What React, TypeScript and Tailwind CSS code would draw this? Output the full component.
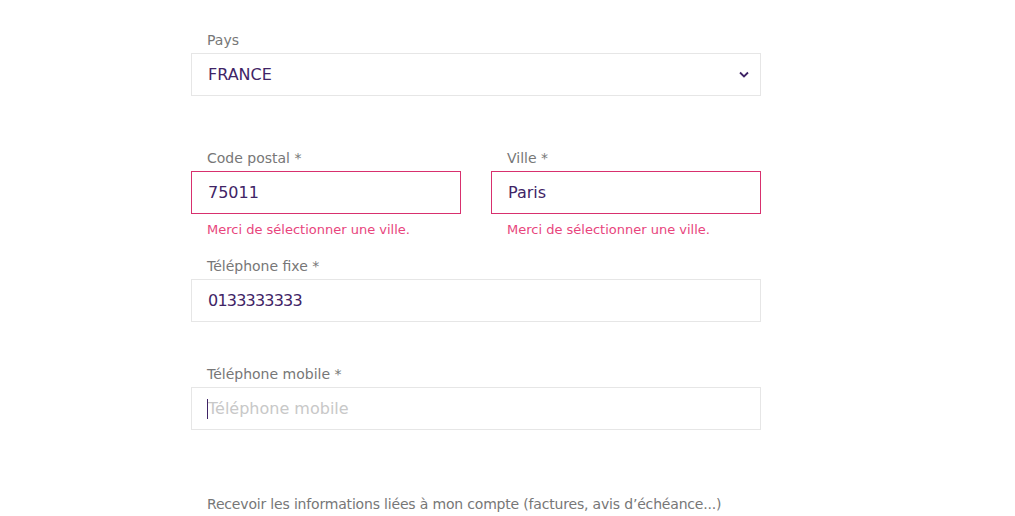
import React, { useState } from 'react';

const font = { fontFamily: '"DejaVu Sans", "Open Sans", sans-serif' };

const Label: React.FC<{ text: string }> = ({ text }) => (
  <div className="h-6 pl-4 text-[14px] leading-[22px] text-[#777777]">{text}</div>
);

const ErrorText: React.FC = () => (
  <div className="mt-[7px] pl-4 text-[13px] leading-[18px] text-[#e8457d]">Merci de sélectionner une ville.</div>
);

export default function App() {
  const [country, setCountry] = useState('FRANCE');
  const [zip, setZip] = useState('75011');
  const [city, setCity] = useState('Paris');
  const [phone, setPhone] = useState('0133333333');
  const [mobile, setMobile] = useState('');

  return (
    <div className="min-h-[516px] w-full overflow-hidden bg-white" style={font}>
      <div className="ml-[191px] w-[570px] pt-[30px]">
        {/* Pays */}
        <div className="h-5 mb-[3px] pl-4 text-[14px] leading-5 text-[#777777]">Pays</div>
        <div className="relative">
          <select
            value={country}
            onChange={(e) => setCountry(e.target.value)}
            className="h-[43px] w-full appearance-none border border-[#e6e6e6] bg-white pl-4 text-[16px] text-[#3f2466] outline-none"
          >
            <option value="FRANCE">FRANCE</option>
            <option value="BELGIQUE">BELGIQUE</option>
          </select>
          <svg className="pointer-events-none absolute right-[12px] top-[18px] h-[7px] w-[10px]" viewBox="0 0 10 7" fill="none">
            <path d="M1 1.5L5 5.5L9 1.5" stroke="#3f2466" strokeWidth="1.8" />
          </svg>
        </div>

        {/* Code postal / Ville */}
        <div className="mt-[51px] flex gap-[30px]">
          <div className="flex-1">
            <Label text="Code postal *" />
            <input
              value={zip}
              onChange={(e) => setZip(e.target.value)}
              className="h-[43px] w-full border border-[#d8306e] pl-4 text-[16px] text-[#3f2466] outline-none"
            />
            <ErrorText />
          </div>
          <div className="flex-1">
            <Label text="Ville *" />
            <input
              value={city}
              onChange={(e) => setCity(e.target.value)}
              className="h-[43px] w-full border border-[#d8306e] pl-4 text-[16px] text-[#3f2466] outline-none"
            />
            <ErrorText />
          </div>
        </div>

        {/* Téléphone fixe */}
        <div className="mt-[16px]">
          <Label text="Téléphone fixe *" />
          <input
            value={phone}
            onChange={(e) => setPhone(e.target.value)}
            className="h-[43px] w-full border border-[#e6e6e6] pl-4 text-[16px] tracking-[-0.8px] text-[#3f2466] outline-none"
          />
        </div>

        {/* Téléphone mobile */}
        <div className="mt-[41px]">
          <Label text="Téléphone mobile *" />
          <div className="relative">
            <input
              value={mobile}
              placeholder="Téléphone mobile"
              onChange={(e) => setMobile(e.target.value)}
              className="h-[43px] w-full border border-[#e6e6e6] pl-4 text-[16px] text-[#3f2466] outline-none placeholder:text-[#c8c8c8]"
            />
            {/* caret */}
            <span className="pointer-events-none absolute left-[16px] top-[12px] h-[20px] w-px bg-[#3f2466]" />
          </div>
        </div>

        <div className="mt-[64px] whitespace-nowrap pl-4 text-[14px] leading-5 tracking-[-0.18px] text-[#777777]">
          Recevoir les informations liées à mon compte (factures, avis d’échéance...)
        </div>
      </div>
    </div>
  );
}
